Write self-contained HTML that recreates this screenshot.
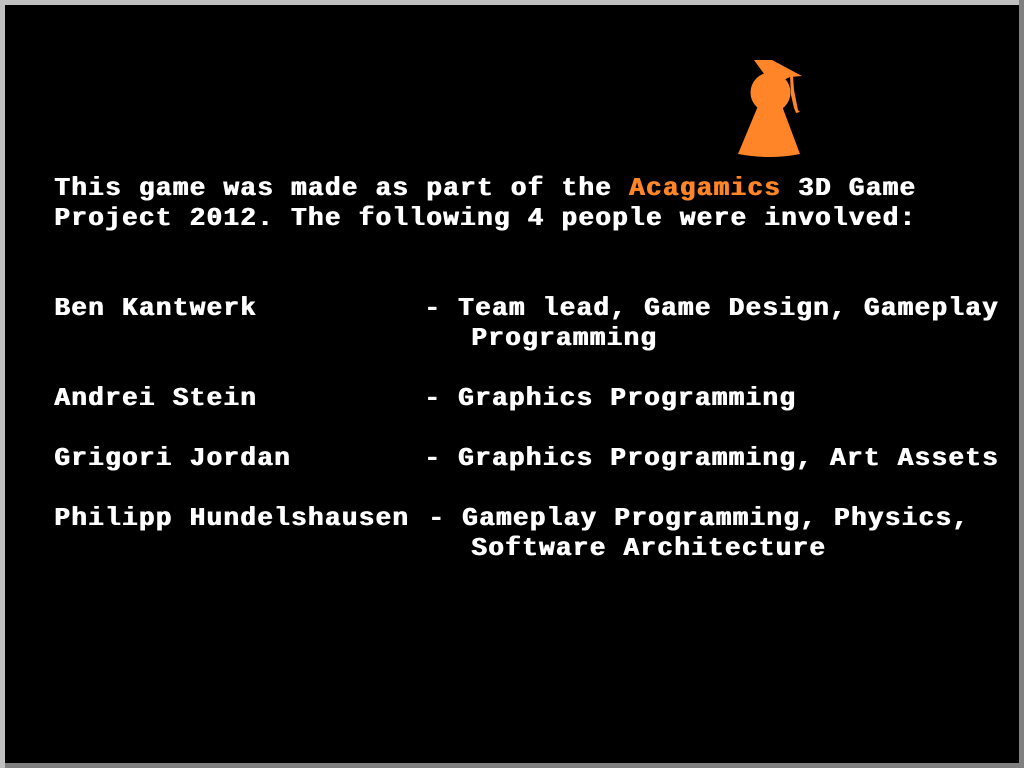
<!DOCTYPE html>
<html><head><style>
body{margin:0;width:1024px;height:768px;background:#000;position:relative;overflow:hidden}
.b{position:absolute;}
.t{position:absolute;font-family:"Liberation Mono",monospace;font-weight:bold;font-size:26px;letter-spacing:1.3px;color:#fff;white-space:pre;line-height:30px;text-shadow:1px 0 0 #fff}
.o{color:#ff8528;text-shadow:1px 0 0 #ff8528}
</style></head><body>
<div class="b" style="left:0;top:0;width:1024px;height:5px;background:#c0c0c0"></div>
<div class="b" style="left:0;top:0;width:5px;height:768px;background:#c0c0c0"></div>
<div class="b" style="left:1019px;top:0;width:5px;height:768px;background:#808080"></div>
<div class="b" style="left:5px;top:763px;width:1019px;height:5px;background:#808080"></div>
<svg class="b" style="left:720px;top:50px" width="100" height="115" viewBox="0 0 100 115">
<g fill="#ff8528">
<path d="M38 56 L18 104 Q50 110 80 104 L62 56 Z"/>
<circle cx="50.5" cy="42.5" r="20"/>
<path d="M34 10 L52 10 L82 26 L70 27 L55 34 L47 28 L42 21 Z"/>
<path d="M70 26 L73 26 L74 40 L76 50 L78 60 L80 62 L76 63 L74 58 L71 45 Z"/>
</g>
</svg>
<div class="t" style="left:54px;top:173px">This game was made as part of the <span class="o">Acagamics</span> 3D Game
Project 2012. The following 4 people were involved:</div>
<div class="t" style="left:54px;top:293px">Ben Kantwerk</div>
<div class="t" style="left:424px;top:293px">- Team lead, Game Design, Gameplay</div>
<div class="t" style="left:471px;top:323px">Programming</div>
<div class="t" style="left:54px;top:383px">Andrei Stein</div>
<div class="t" style="left:424px;top:383px">- Graphics Programming</div>
<div class="t" style="left:54px;top:443px">Grigori Jordan</div>
<div class="t" style="left:424px;top:443px">- Graphics Programming, Art Assets</div>
<div class="t" style="left:54px;top:503px">Philipp Hundelshausen</div>
<div class="t" style="left:428px;top:503px">- Gameplay Programming, Physics,</div>
<div class="t" style="left:471px;top:533px">Software Architecture</div>
</body></html>
